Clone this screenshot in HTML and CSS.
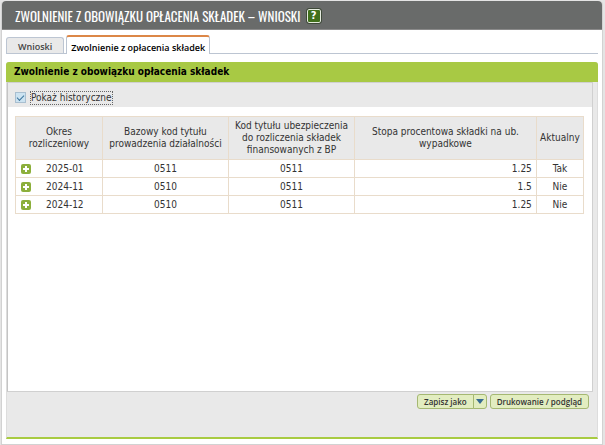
FILE: index.html
```html
<!DOCTYPE html>
<html lang="pl">
<head>
<meta charset="utf-8">
<title>Zwolnienie z obowiązku opłacenia składek – wnioski</title>
<link rel="stylesheet" href="styles.css">
</head>
<body>
<main class="window">
  <header class="titlebar">
    <h1>ZWOLNIENIE Z OBOWIĄZKU OPŁACENIA SKŁADEK – WNIOSKI</h1>
    <button class="help" type="button" aria-label="Pomoc">?</button>
  </header>
  <nav class="tabs">
    <a class="tab" href="#wnioski">Wnioski</a>
    <a class="tab active" href="#zwolnienie" aria-current="page">Zwolnienie z opłacenia składek</a>
  </nav>
  <section class="panel" id="zwolnienie">
    <h2>Zwolnienie z obowiązku opłacenia składek</h2>
    <div class="content">
      <div class="filter">
        <input type="checkbox" id="history" checked>
        <label for="history">Pokaż historyczne</label>
      </div>
      <table>
        <colgroup>
          <col class="c-period"><col class="c-code"><col class="c-code"><col class="c-rate"><col class="c-current">
        </colgroup>
        <thead>
          <tr>
            <th>Okres<br>rozliczeniowy</th>
            <th>Bazowy kod tytułu<br>prowadzenia działalności</th>
            <th>Kod tytułu ubezpieczenia<br>do rozliczenia składek<br>finansowanych z BP</th>
            <th>Stopa procentowa składki na ub.<br>wypadkowe</th>
            <th>Aktualny</th>
          </tr>
        </thead>
        <tbody>
          <tr>
            <td><div class="period"><button class="expand" type="button" aria-label="Rozwiń"><svg viewBox="0 0 10 10"><path d="M4 2h2v2h2v2H6v2H4V6H2V4h2z"/></svg></button><span>2025-01</span></div></td>
            <td>0511</td><td>0511</td><td class="num">1.25</td><td>Tak</td>
          </tr>
          <tr>
            <td><div class="period"><button class="expand" type="button" aria-label="Rozwiń"><svg viewBox="0 0 10 10"><path d="M4 2h2v2h2v2H6v2H4V6H2V4h2z"/></svg></button><span>2024-11</span></div></td>
            <td>0510</td><td>0511</td><td class="num">1.5</td><td>Nie</td>
          </tr>
          <tr>
            <td><div class="period"><button class="expand" type="button" aria-label="Rozwiń"><svg viewBox="0 0 10 10"><path d="M4 2h2v2h2v2H6v2H4V6H2V4h2z"/></svg></button><span>2024-12</span></div></td>
            <td>0510</td><td>0511</td><td class="num">1.25</td><td>Nie</td>
          </tr>
        </tbody>
      </table>
    </div>
    <footer class="actions">
      <div class="split">
        <button class="save" type="button">Zapisz jako</button>
        <button class="more" type="button" aria-label="Wybierz format"><svg viewBox="0 0 8 5"><path d="M0 0h8L4 5z"/></svg></button>
      </div>
      <button class="print" type="button">Drukowanie / podgląd</button>
    </footer>
  </section>
</main>
</body>
</html>
```
FILE: styles.css
```css
* {
  box-sizing: border-box;
}

body {
  margin: 0;
  padding: 1px 2px 0 1px;
  min-height: 100vh;
  display: flex;
  background: #e4e4e4;
  color: #333;
  font: 10px/12px "DejaVu Sans Condensed", "Noto Sans", sans-serif;
}

h1, h2 {
  margin: 0;
}

button {
  font: inherit;
  cursor: pointer;
}

.window {
  flex: 1;
  display: flex;
  flex-direction: column;
  background: #fff;
  border: 1px solid #d2d2d2;
  border-top: 0;
  border-radius: 4px 4px 0 0;
  padding-bottom: 5px;
}

.titlebar {
  display: flex;
  align-items: center;
  gap: 6px;
  height: 29px;
  padding: 2px 0 0 13px;
  background: #696b6a;
  border-bottom: 1px solid #8a8a8a;
  border-radius: 4px 4px 0 0;
}

.titlebar h1 {
  color: #fff;
  font: 13px/18px "Oswald", "Liberation Sans Narrow", sans-serif;
  white-space: nowrap;
}

.help {
  width: 14px;
  height: 14px;
  padding: 0;
  background: #41701c;
  border: 1px solid #e5ebdf;
  border-radius: 2px;
  outline: 1px solid #3f4a39;
  color: #fff;
  font-size: 11px;
  font-weight: bold;
}

.tabs {
  display: flex;
  align-items: flex-end;
  gap: 2px;
  height: 24px;
  margin: 0 4px;
  border-bottom: 1px solid #bcc5d2;
}

.tab {
  height: 16px;
  padding: 3px 11px 0;
  background: #e9e9e9;
  border: 1px solid #bcc5d2;
  border-bottom: 0;
  border-radius: 3px 3px 0 0;
  color: #444;
  font-family: "Open Sans", "Noto Sans", sans-serif;
  font-size: 9px;
  font-weight: 600;
  text-decoration: none;
  white-space: nowrap;
}

.tab.active {
  height: 19px;
  margin-bottom: -1px;
  padding: 5px 4px 0;
  background: #fff;
  border-top: 2px solid #dc8747;
  color: #000;
}

.panel {
  flex: 1;
  display: flex;
  flex-direction: column;
  margin: 8px 4px 0;
  background: #e9e9e9;
  border: 1px solid #ddd;
  border-top: 0;
  border-bottom: 2px solid #a8cb42;
  border-radius: 3px 3px 0 0;
}

.panel h2 {
  margin: 0 -1px;
  padding-left: 8px;
  background: #a8c944;
  border-radius: 3px 3px 0 0;
  color: #000;
  font-size: 10px;
  line-height: 20px;
}

.content {
  flex: 1;
  margin-right: 4px;
  background: #fff;
  border: 1px solid #d0d0d0;
  border-left-color: #c4c4c4;
}

.filter {
  display: flex;
  align-items: center;
  gap: 4px;
  height: 24px;
  padding: 5px 7px 0;
  background: #e9e9e9;
}

.filter input {
  appearance: none;
  width: 11px;
  height: 11px;
  margin: 0;
  border: 1px solid #a9bfd0;
  background: #cce3f1;
  display: grid;
  place-items: center;
}

.filter input:checked::before {
  content: "";
  width: 6px;
  height: 3px;
  margin-bottom: 2px;
  border: solid #3c749c;
  border-width: 0 0 1px 1px;
  rotate: -45deg;
}

.filter label {
  border: 1px dotted #666;
}

table {
  width: calc(100% - 15px);
  margin: 9px 8px 0 7px;
  border-collapse: collapse;
  table-layout: fixed;
}

.c-period { width: 15.3%; }
.c-code { width: 22.2%; }
.c-rate { width: 32%; }
.c-current { width: 8.3%; }

th, td {
  border: 1px solid #e9dccb;
  padding: 0;
  text-align: center;
  white-space: nowrap;
}

th {
  height: 43px;
  background: #e9e9e9;
  font-weight: normal;
}

td {
  height: 18px;
}

.num {
  padding-right: 4px;
  text-align: right;
}

.period {
  display: flex;
  align-items: center;
  gap: 15px;
  padding-left: 5px;
}

.expand {
  width: 10px;
  height: 10px;
  padding: 0;
  background: #8caf3b;
  border: 0;
  border-radius: 2px;
}

.expand svg {
  display: block;
  fill: #fff;
}

.actions {
  display: flex;
  justify-content: flex-end;
  align-items: flex-start;
  gap: 3px;
  height: 45px;
  padding: 2px 8px 0;
}

.actions button {
  height: 15px;
  padding: 0 6px;
  background: #e2edc0;
  border: 1px solid #a5b872;
  border-radius: 3px;
  color: #333;
  font-family: "Open Sans", "Noto Sans", sans-serif;
  font-size: 8px;
  font-weight: 600;
  white-space: nowrap;
}

.split {
  display: flex;
}

.actions .save {
  border-radius: 3px 0 0 3px;
}

.actions .more {
  width: 14px;
  margin-left: -1px;
  padding: 0 2px;
  border-radius: 0 3px 3px 0;
}

.more svg {
  display: block;
  fill: #376a91;
}
```
